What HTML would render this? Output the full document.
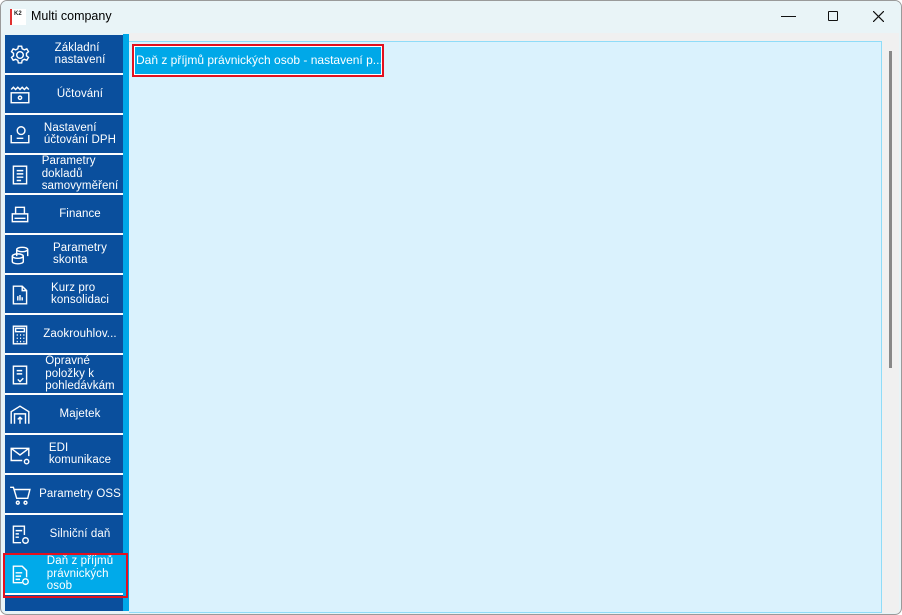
<!DOCTYPE html>
<html><head><meta charset="utf-8"><style>
*{margin:0;padding:0;box-sizing:border-box}
body{width:902px;height:615px;overflow:hidden;background:#fff;font-family:"Segoe UI","Liberation Sans",sans-serif;position:relative}
.win{position:absolute;left:0;top:0;width:902px;height:615px;border:1px solid #9a9a9a;border-radius:7px;overflow:hidden;background:#e8f4f7}
.title{position:absolute;left:0;top:0;width:902px;height:32px;background:#e9f4f7}
.title .t{position:absolute;left:30px;top:8px;font-size:12.5px;color:#000}
.logo{position:absolute;left:9px;top:8px;width:16px;height:16px;background:#fff;border-left:2px solid #e03030}
.logo span{position:absolute;left:2px;top:2px;font-size:6px;font-weight:bold;color:#222}
.item{position:absolute;left:0;width:118px;height:40px;border-bottom:2px solid #fff;color:#fff;font-size:11.5px;line-height:12.5px;font-weight:normal;letter-spacing:0.1px}
.item .ic{position:absolute;left:4px;top:9px;width:22px;height:22px}
.item .tx{position:absolute;left:32px;right:0;top:0;bottom:0;display:flex;align-items:center;justify-content:center}
.item .tx div{text-align:left}
.side{position:absolute;left:4px;top:34px;width:118px;height:576px;background:#0a4f9d}
.strip{position:absolute;left:122px;top:33px;width:6px;height:577px;background:#00a8e8}
.sel{background:#00aaea}
.redside{position:absolute;left:2px;top:552px;width:125px;height:45px;border:2px solid #e3101e}
.topband{position:absolute;left:128px;top:32px;width:770px;height:8px;background:#f0f0f0}
.content{position:absolute;left:128px;top:40px;width:753px;height:572px;background:#daf2fd;border:1px solid #8fdcf8;border-left:none}
.scroll{position:absolute;left:881px;top:40px;width:17px;height:572px;background:#f0f0f0}
.thumb{position:absolute;left:888px;top:50px;width:3px;height:317px;background:#888}
.redbox{position:absolute;left:131px;top:43px;width:252px;height:33px;border:2px solid #e3101e;background:#fff}
.bluebox{position:absolute;left:1px;top:1px;right:1px;bottom:1px;background:#00a8e8;color:#fff;font-size:12px;line-height:27px;padding-left:1px;white-space:nowrap;overflow:hidden}
svg{stroke:#fff;fill:none;stroke-width:1.3}
</style></head><body><div class="win">
<div class="title"><div class="logo"><span>K2</span></div><div class="t">Multi company</div>
<div style="position:absolute;left:780px;top:15px;width:15px;height:1.3px;background:#111"></div>
<div style="position:absolute;left:827px;top:10px;width:10px;height:10px;border:1.3px solid #111;border-radius:1px"></div>
<svg style="position:absolute;left:872px;top:10px;width:11px;height:11px;stroke:#111;stroke-width:1.2" viewBox="0 0 11 11"><path d="M0 0L11 11M11 0L0 11"/></svg>
</div>
<div class="side">
<div class="item" style="top:0"><svg class="ic" viewBox="0 0 20 20"><circle cx="10" cy="10" r="3"/><path d="M8.5 2h3l.5 2.3 2 1 2.2-.9 1.5 2.6-1.8 1.5v2.2l1.8 1.5-1.5 2.6-2.2-.9-2 1-.5 2.3h-3l-.5-2.3-2-1-2.2.9-1.5-2.6 1.8-1.5V8.5L2.3 7l1.5-2.6 2.2.9 2-1z"/></svg><div class="tx"><div>Základní<br>nastavení</div></div></div>
<div class="item" style="top:40px"><svg class="ic" viewBox="0 0 20 20"><path d="M2 5l2-2 2 2 2-2 2 2 2-2 2 2 2-2 2 2"/><rect x="2" y="8" width="16" height="9"/><circle cx="10" cy="12.5" r="1.5"/></svg><div class="tx"><div>Účtování</div></div></div>
<div class="item" style="top:80px"><svg class="ic" viewBox="0 0 20 20"><circle cx="11" cy="6" r="3.5"/><path d="M2 10v7h16v-7M7 13h6"/></svg><div class="tx"><div>Nastavení<br>účtování DPH</div></div></div>
<div class="item" style="top:120px"><svg class="ic" viewBox="0 0 20 20"><rect x="4" y="2" width="12" height="16"/><path d="M7 6h6M7 9h6M7 12h6M7 15h4"/></svg><div class="tx"><div>Parametry<br>dokladů<br>samovyměření</div></div></div>
<div class="item" style="top:160px"><svg class="ic" viewBox="0 0 20 20"><path d="M6 3h8v6H6zM3 9h14v7H3zM5 13h10"/></svg><div class="tx"><div>Finance</div></div></div>
<div class="item" style="top:200px"><svg class="ic" viewBox="0 0 20 20"><ellipse cx="12" cy="5" rx="5" ry="2"/><path d="M7 5v6M17 5v6"/><ellipse cx="8" cy="11" rx="5" ry="2"/><path d="M3 11v5c0 1 2 2 5 2s5-1 5-2v-5"/></svg><div class="tx"><div>Parametry<br>skonta</div></div></div>
<div class="item" style="top:240px"><svg class="ic" viewBox="0 0 20 20"><path d="M4 2h8l4 4v12H4zM12 2v4h4M8 15v-4M10 15v-5M12 15v-3"/></svg><div class="tx"><div>Kurz pro<br>konsolidaci</div></div></div>
<div class="item" style="top:280px"><svg class="ic" viewBox="0 0 20 20"><rect x="4" y="2" width="12" height="16"/><path d="M6 4h8v3H6zM7 10h1M10 10h1M13 10h1M7 13h1M10 13h1M13 13h1M7 16h1M10 16h1M13 16h1"/></svg><div class="tx"><div>Zaokrouhlov...</div></div></div>
<div class="item" style="top:320px"><svg class="ic" viewBox="0 0 20 20"><rect x="4" y="2" width="12" height="16"/><path d="M7 6h5M7 9h5M8 14l2 2 3-3"/></svg><div class="tx"><div>Opravné<br>položky k<br>pohledávkám</div></div></div>
<div class="item" style="top:360px"><svg class="ic" viewBox="0 0 20 20"><path d="M2 18V7l8-5 8 5v11M5 18V9h10v9M10 18v-6M8 14l2-2 2 2"/></svg><div class="tx"><div>Majetek</div></div></div>
<div class="item" style="top:400px"><svg class="ic" viewBox="0 0 20 20"><path d="M12 15H2V4h16v7M2 4l8 6 8-6"/><circle cx="16" cy="16" r="2"/></svg><div class="tx"><div>EDI<br>komunikace</div></div></div>
<div class="item" style="top:440px"><svg class="ic" viewBox="0 0 20 20"><path d="M1 3h3l3 10h10l2-8H5"/><circle cx="8" cy="17" r="1.3"/><circle cx="15" cy="17" r="1.3"/></svg><div class="tx"><div>Parametry OSS</div></div></div>
<div class="item" style="top:480px"><svg class="ic" viewBox="0 0 20 20"><path d="M11 17H4V2h10v8M6 6h6M6 9h3M6 12h3"/><circle cx="15" cy="15" r="2.5"/></svg><div class="tx"><div>Silniční daň</div></div></div>
<div class="item sel" style="top:520px"><svg class="ic" viewBox="0 0 20 20"><path d="M12 17H4V2h8l4 4v6M6 8h6M6 11h5M6 14h4"/><circle cx="15" cy="16" r="2.5"/></svg><div class="tx"><div>Daň z příjmů<br>právnických<br>osob</div></div></div>
</div>
<div class="strip"></div>
<div class="redside"></div>
<div class="topband"></div>
<div class="content"></div>
<div class="scroll"></div>
<div class="thumb"></div>
<div class="redbox"><div class="bluebox">Daň z příjmů právnických osob - nastavení p...</div></div>
</div></body></html>
